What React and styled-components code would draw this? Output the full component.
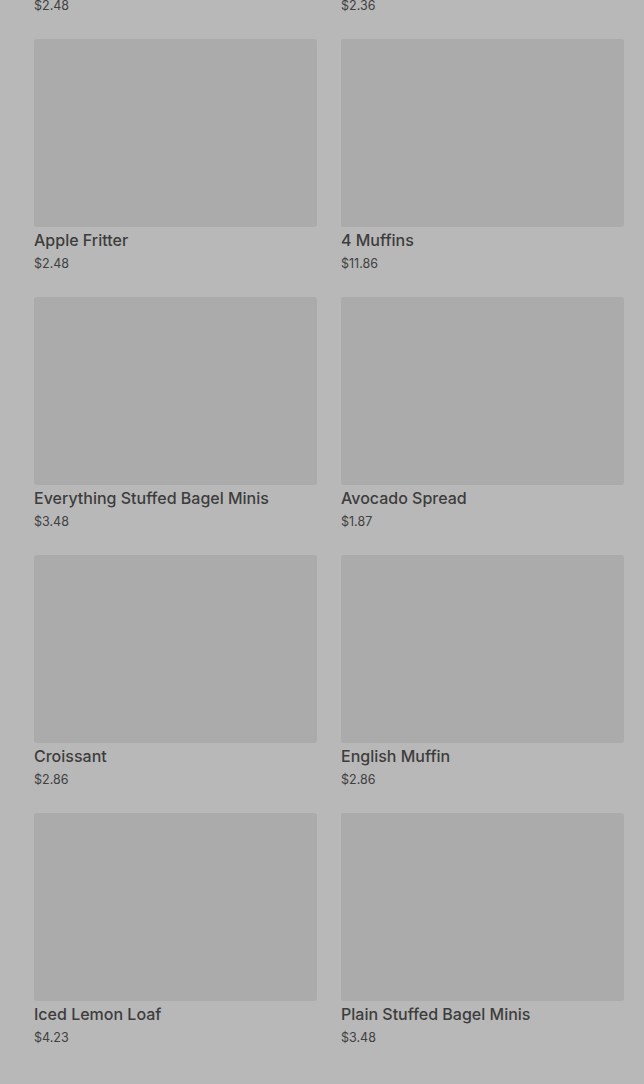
import React from "react";
import styled, { createGlobalStyle } from "styled-components";

const Global = createGlobalStyle`
  html, body { margin: 0; padding: 0; background: #b8b8b8; }
  body { font-family: Inter, Roboto, "Liberation Sans", sans-serif; overflow: hidden; }
`;

const Page = styled.div`
  height: 1084px;
  overflow: hidden;
  background: #b8b8b8;
`;

const Grid = styled.div`
  display: grid;
  grid-template-columns: 283px 283px;
  column-gap: 24px;
  row-gap: 23px;
  padding: 0 20px 0 34px;
  margin-top: -219px;
`;

const Card = styled.div`
  display: flex;
  flex-direction: column;
`;

const Thumb = styled.div`
  height: 188px;
  background: #ababab;
  border-radius: 3px;
`;

const Title = styled.div`
  margin-top: 2px;
  font-size: 16px;
  line-height: 22px;
  font-weight: 500;
  color: #3d3d3d;
  white-space: nowrap;
`;

const Price = styled.div`
  margin-top: 3px;
  font-size: 12.5px;
  line-height: 20px;
  color: #404040;
`;

const items = [
  ["Glazed Donut", "$2.48"],
  ["Blueberry Muffin", "$2.36"],
  ["Apple Fritter", "$2.48"],
  ["4 Muffins", "$11.86"],
  ["Everything Stuffed Bagel Minis", "$3.48"],
  ["Avocado Spread", "$1.87"],
  ["Croissant", "$2.86"],
  ["English Muffin", "$2.86"],
  ["Iced Lemon Loaf", "$4.23"],
  ["Plain Stuffed Bagel Minis", "$3.48"],
];

export default function App() {
  return (
    <Page>
      <Global />
      <Grid>
        {items.map(([t, p]) => (
          <Card key={t}>
            <Thumb />
            <Title>{t}</Title>
            <Price>{p}</Price>
          </Card>
        ))}
      </Grid>
    </Page>
  );
}
